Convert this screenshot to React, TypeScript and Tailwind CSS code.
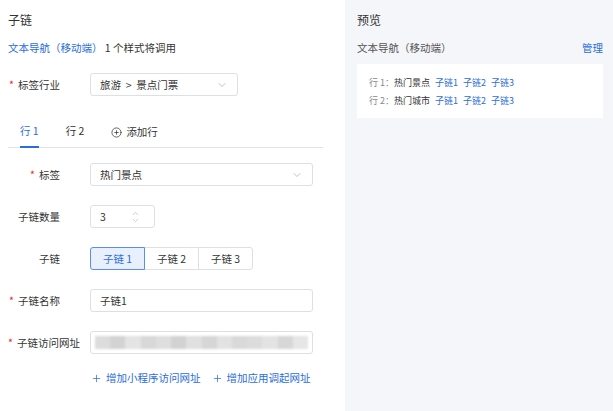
import React, { useState } from 'react';
import { ChevronDown, ChevronUp, CirclePlus, Plus } from 'lucide-react';

const font = { fontFamily: '"Noto Sans CJK SC", "Noto Sans", sans-serif' };

const Label: React.FC<{ text: string; required?: boolean }> = ({ text, required }) => (
  <div className="w-[52px] shrink-0 text-right whitespace-nowrap text-[10.5px] text-[#333]">
    {required && <span className="text-[#f5222d] mr-[4px]">*</span>}
    {text}
  </div>
);

const Select: React.FC<{ value: string; width: string }> = ({ value, width }) => (
  <div
    className={`${width} h-[23px] ml-[30px] flex items-center justify-between px-[9px] border border-[#dcdfe6] rounded-[3px] bg-white text-[10.5px] text-[#333]`}
  >
    <span className="whitespace-pre">{value}</span>
    <ChevronDown size={12} strokeWidth={1.2} className="text-[#999]" />
  </div>
);

const blurBlocks = ['#dcdcdc', '#d3d3d3', '#e4e4e4', '#d8d8d8', '#dedede', '#d2d2d2', '#e0e0e0', '#d6d6d6', '#e2e2e2', '#d9d9d9', '#dcdcdc', '#e3e3e3', '#d7d7d7', '#e6e6e6'];

const App: React.FC = () => {
  const [activeTab, setActiveTab] = useState(0);
  const [activeLink, setActiveLink] = useState(0);

  return (
    <div className="w-[613px] h-[411px] flex bg-white overflow-hidden" style={font}>
      {/* Left: editor */}
      <div className="w-[345px] shrink-0 pl-[8px] pt-[12px]">
        <div className="text-[12px] leading-[16px] text-[#333]">子链</div>
        <div className="mt-[13px] text-[10.5px] leading-[14px] text-[#333]">
          <span className="text-[#2a6ddb]">文本导航（移动端）</span> 1 个样式将调用
        </div>

        <div className="mt-[18px] flex items-center">
          <Label text="标签行业" required />
          <Select value="旅游  >  景点门票" width="w-[148px]" />
        </div>

        {/* Tabs */}
        <div className="mt-[28px] w-[315px] flex items-end border-b border-[#dfe3ea] pl-[12px] text-[10.5px] leading-[14px]">
          {['行 1', '行 2'].map((t, i) => (
            <button
              key={t}
              onClick={() => setActiveTab(i)}
              className={`mr-[27px] pb-[8px] px-0 border-b-2 -mb-px ${
                activeTab === i ? 'text-[#2a6ddb] border-[#2a6ddb]' : 'text-[#333] border-transparent'
              }`}
            >
              {t}
            </button>
          ))}
          <div className="flex items-center gap-[4px] pb-[8px] text-[#333]">
            <CirclePlus size={11} strokeWidth={1.6} />
            <span>添加行</span>
          </div>
        </div>

        <div className="mt-[15px] flex flex-col gap-[19px]">
          <div className="flex items-center">
            <Label text="标签" required />
            <Select value="热门景点" width="w-[223px]" />
          </div>

          <div className="flex items-center">
            <Label text="子链数量" />
            <div className="w-[65px] h-[23px] ml-[30px] flex items-center justify-between pl-[9px] pr-[14px] border border-[#dcdfe6] rounded-[3px] text-[10.5px] text-[#333]">
              <span>3</span>
              <div className="flex flex-col items-center text-[#999] -space-y-[2px]">
                <ChevronUp size={9} strokeWidth={1.3} />
                <ChevronDown size={9} strokeWidth={1.3} />
              </div>
            </div>
          </div>

          <div className="flex items-center">
            <Label text="子链" />
            <div className="ml-[30px] flex h-[23px]">
              {['子链 1', '子链 2', '子链 3'].map((t, i) => (
                <button
                  key={t}
                  onClick={() => setActiveLink(i)}
                  className={`w-[55px] h-[23px] text-[10.5px] border ${i > 0 ? '-ml-px' : ''} ${
                    i === 0 ? 'rounded-l-[3px]' : ''
                  } ${i === 2 ? 'rounded-r-[3px]' : ''} ${
                    activeLink === i
                      ? 'relative z-10 bg-[#e8f0fe] border-[#5b8def] text-[#2a6ddb]'
                      : 'bg-white border-[#dcdfe6] text-[#333]'
                  }`}
                >
                  {t}
                </button>
              ))}
            </div>
          </div>

          <div className="flex items-center">
            <Label text="子链名称" required />
            <div className="w-[223px] h-[23px] ml-[30px] flex items-center px-[9px] border border-[#dcdfe6] rounded-[3px] text-[10.5px] text-[#333]">
              子链1
            </div>
          </div>

          <div className="flex items-center">
            <Label text="子链访问网址" required />
            <div className="w-[223px] h-[23px] ml-[30px] flex items-center px-[4px] border border-[#dcdfe6] rounded-[3px] overflow-hidden">
              <div className="flex h-[13px] blur-[1px] w-[215px]">
                {blurBlocks.map((c, i) => (
                  <div key={i} className="flex-1 h-full" style={{ backgroundColor: c }} />
                ))}
              </div>
            </div>
          </div>
        </div>

        <div className="mt-[17px] ml-[83px] flex items-center gap-[11px] text-[10.5px] leading-[14px] text-[#2a6ddb]">
          <div className="flex items-center gap-[4px]">
            <Plus size={11} strokeWidth={1.6} />
            <span>增加小程序访问网址</span>
          </div>
          <div className="flex items-center gap-[4px]">
            <Plus size={11} strokeWidth={1.6} />
            <span>增加应用调起网址</span>
          </div>
        </div>
      </div>

      {/* Right: preview */}
      <div className="flex-1 bg-[#f5f6fa] pl-[12px] pr-[10px] pt-[12px]">
        <div className="text-[12px] leading-[16px] text-[#333]">预览</div>
        <div className="mt-[13px] flex items-center justify-between text-[10.5px] leading-[14px]">
          <span className="text-[#555]">文本导航（移动端）</span>
          <span className="text-[#2a6ddb]">管理</span>
        </div>
        <div className="mt-[9px] bg-white h-[54px] pl-[12px] pt-[10px] text-[9px] leading-[18px]">
          {[
            ['行 1：', '热门景点'],
            ['行 2：', '热门城市'],
          ].map(([row, name]) => (
            <div key={row}>
              <span className="text-[#888]">{row}</span>
              <span className="text-[#333]">{name}</span>
              {['子链1', '子链2', '子链3'].map((l) => (
                <span key={l} className="ml-[5px] text-[#2a6ddb]">
                  {l}
                </span>
              ))}
            </div>
          ))}
        </div>
      </div>
    </div>
  );
};

export default App;
